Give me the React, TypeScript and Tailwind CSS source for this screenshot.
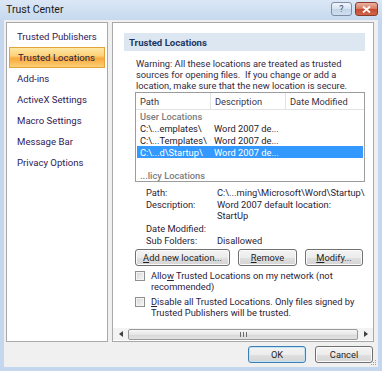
import React from 'react';

const sideItems = [
  'Trusted Publishers',
  'Trusted Locations',
  'Add-ins',
  'ActiveX Settings',
  'Macro Settings',
  'Message Bar',
  'Privacy Options',
];

const rows = [
  { path: 'C:\\...emplates\\', desc: 'Word 2007 de...' },
  { path: 'C:\\...Templates\\', desc: 'Word 2007 de...' },
  { path: 'C:\\...d\\Startup\\', desc: 'Word 2007 de...', selected: true },
];

const btn =
  'h-[17px] rounded-[3px] border border-[#707070] bg-[linear-gradient(to_bottom,#f4f4f4_0%,#ececec_50%,#e0e0e0_50%,#d4d4d4_100%)] shadow-[inset_0_0_0_1px_#fbfbfb] flex items-center justify-center text-[#1e1e1e]';

function Checkbox() {
  return (
    <div className="w-[10px] h-[10px] shrink-0 border border-[#8e8f8f] bg-[linear-gradient(135deg,#d6d6d6,#f6f6f6)] shadow-[inset_0_0_0_1px_#f4f4f4]" />
  );
}

export default function App() {
  return (
    <div className="w-[382px] h-[371px] bg-[#c4d7ee] flex flex-col overflow-hidden font-['Roboto',sans-serif] text-[9.3px] leading-[11px] text-[#2b2340]">
      {/* title bar */}
      <div className="h-[20px] shrink-0 flex items-start pl-[6px] pr-[4px] bg-[linear-gradient(to_bottom,#dbe7f5,#c6d9ef)]">
        <span className="mt-[3px] text-[10.5px] leading-[13px] text-[#1b1b1b]">Trust Center</span>
        <div className="ml-auto mt-[2px] flex gap-[3px]">
          <div className="w-[21px] h-[14px] rounded-[3px] border border-[#7d8da5] bg-[linear-gradient(to_bottom,#f0f5fb,#d5e2f1_50%,#c3d4e9_51%,#cfdff0)] flex items-center justify-center text-[9px] leading-[9px] text-[#3f4e66]">
            ?
          </div>
          <div className="w-[23px] h-[14px] rounded-[3px] border border-[#8a3a2a] bg-[linear-gradient(to_bottom,#eab3a4,#d8765f_50%,#c54a30_51%,#d0664a)] flex items-center justify-center">
            <svg width="9" height="7" viewBox="0 0 9 7">
              <path d="M1 0.5 L8 6.5 M8 0.5 L1 6.5" stroke="#fff" strokeWidth="1.8" />
            </svg>
          </div>
        </div>
      </div>

      {/* body */}
      <div className="flex-1 mx-[4px] mb-[4px] bg-[#f0f0f0] flex flex-col pl-[2px] pr-[4px] pt-[2px] relative">
        <div className="flex gap-[4px] h-[320px]">
          {/* left nav */}
          <div className="w-[102px] shrink-0 border border-[#a9a9a9] bg-white pt-[3px] px-[2px]">
            {sideItems.map((item) => {
              const active = item === 'Trusted Locations';
              return (
                <div
                  key={item}
                  className={
                    'h-[21px] flex items-center pl-[8px] text-[9.6px] ' +
                    (active
                      ? 'border border-[#e3a53b] bg-[linear-gradient(to_bottom,#fde8a6_0%,#fcd27a_40%,#f9a93c_55%,#fccf74_100%)] text-[#2a2040]'
                      : 'text-[#2f2158]')
                  }
                >
                  {item}
                </div>
              );
            })}
          </div>

          {/* right content */}
          <div className="flex-1 border border-[#a9a9a9] bg-white flex flex-col overflow-hidden">
            <div className="flex-1 pt-[10px] pl-[11px] pr-[8px] overflow-hidden">
              <div className="h-[18px] bg-[#dde7f1] pl-[5px] flex items-center font-bold text-[9.6px] text-[#1d3763]">
                Trusted Locations
              </div>

              <p className="mt-[7px] pl-[12px] whitespace-nowrap text-[#33293f]">
                Warning: All these locations are treated as trusted
                <br />
                sources for opening files.&nbsp; If you change or add a
                <br />
                location, make sure that the new location is secure.
              </p>

              {/* list box */}
              <div className="mt-[1px] ml-[11px] w-[230px] h-[90px] border border-[#9c9c9c] bg-white flex flex-col">
                <div className="h-[17px] flex border-b border-[#e3e3e3] text-[#3a3344]">
                  <div className="w-[75px] pl-[4px] flex items-center border-r border-[#e3e3e3]">Path</div>
                  <div className="w-[75px] pl-[4px] flex items-center border-r border-[#e3e3e3]">Description</div>
                  <div className="flex-1 pl-[4px] flex items-center">Date Modified</div>
                </div>
                <div className="h-[12px] pl-[4px] flex items-center text-[#7d7d7d] font-medium">User Locations</div>
                {rows.map((r) => (
                  <div
                    key={r.path}
                    className={
                      'h-[12px] mx-[1px] flex items-center ' +
                      (r.selected ? 'bg-[#3399ff] text-white' : 'text-[#1f1a2a]')
                    }
                  >
                    <div className="w-[74px] pl-[3px] whitespace-nowrap">{r.path}</div>
                    <div className="pl-[3px] whitespace-nowrap">{r.desc}</div>
                  </div>
                ))}
                <div className="h-[11px]" />
                <div className="h-[12px] pl-[4px] flex items-center text-[#7d7d7d] font-medium">...licy Locations</div>
              </div>

              {/* details */}
              <div className="mt-[4px] pl-[22px] text-[#2a2438]">
                <div className="flex h-[12px] items-center">
                  <div className="w-[71px] shrink-0">Path:</div>
                  <div className="whitespace-nowrap">C:\...ming\Microsoft\Word\Startup\</div>
                </div>
                <div className="flex pt-[1px]">
                  <div className="w-[71px] shrink-0">Description:</div>
                  <div>
                    Word 2007 default location:
                    <br />
                    StartUp
                  </div>
                </div>
                <div className="flex h-[12px] mt-[1px] items-center">
                  <div className="w-[71px] shrink-0">Date Modified:</div>
                </div>
                <div className="flex h-[12px] items-center">
                  <div className="w-[71px] shrink-0">Sub Folders:</div>
                  <div>Disallowed</div>
                </div>
              </div>

              {/* buttons */}
              <div className="mt-[3px] ml-[11px] flex gap-[8px]">
                <div className={btn + ' w-[95px]'}>
                  <span>
                    <u>A</u>dd new location...
                  </span>
                </div>
                <div className={btn + ' w-[59px]'}>
                  <span>
                    <u>R</u>emove
                  </span>
                </div>
                <div className={btn + ' w-[58px]'}>
                  <span>
                    <u>M</u>odify...
                  </span>
                </div>
              </div>

              {/* checkboxes */}
              <div className="mt-[4px] ml-[11px] flex gap-[6px] items-start">
                <div className="mt-[1px]">
                  <Checkbox />
                </div>
                <div className="whitespace-nowrap text-[#2b2340]">
                  Allo<u>w</u> Trusted Locations on my network (not
                  <br />
                  recommended)
                </div>
              </div>
              <div className="mt-[4px] ml-[11px] flex gap-[6px] items-start">
                <div className="mt-[1px]">
                  <Checkbox />
                </div>
                <div className="whitespace-nowrap text-[#2b2340]">
                  <u>D</u>isable all Trusted Locations. Only files signed by
                  <br />
                  Trusted Publishers will be trusted.
                </div>
              </div>
            </div>

            {/* horizontal scrollbar */}
            <div className="h-[12px] mb-[1px] shrink-0 flex items-center bg-[#f3f3f3]">
              <div className="w-[15px] flex items-center justify-center">
                <svg width="4" height="6" viewBox="0 0 4 6">
                  <path d="M4 0 L0 3 L4 6 Z" fill="#404040" />
                </svg>
              </div>
              <div className="flex-1 h-[11px] rounded-[2px] border border-[#9a9a9a] bg-[linear-gradient(to_bottom,#f6f6f6,#e6e6e6_50%,#d8d8d8_51%,#e2e2e2)] flex items-center justify-center">
                <svg width="7" height="5" viewBox="0 0 7 5">
                  <path d="M0.5 0 V5 M3.5 0 V5 M6.5 0 V5" stroke="#6c6c6c" strokeWidth="1" />
                </svg>
              </div>
              <div className="w-[15px] flex items-center justify-center">
                <svg width="4" height="6" viewBox="0 0 4 6">
                  <path d="M0 0 L4 3 L0 6 Z" fill="#404040" />
                </svg>
              </div>
            </div>
          </div>
        </div>

        {/* dialog buttons */}
        <div className="mt-[4px] flex justify-end gap-[9px] pr-[1px]">
          <div className="w-[58px] h-[17px] rounded-[3px] border border-[#3c7fb1] bg-[linear-gradient(to_bottom,#f4f4f4_0%,#ececec_50%,#e0e0e0_50%,#d4d4d4_100%)] shadow-[inset_0_0_0_1px_#bfe4f9] flex items-center justify-center text-[#1e1e1e]">
            OK
          </div>
          <div className={btn + ' w-[58px]'}>Cancel</div>
        </div>

        {/* resize grip */}
        <svg className="absolute right-[1px] bottom-[1px]" width="8" height="8" viewBox="0 0 8 8">
          <rect x="6" y="2" width="1" height="1" fill="#a0a0a0" />
          <rect x="4" y="4" width="1" height="1" fill="#a0a0a0" />
          <rect x="6" y="4" width="1" height="1" fill="#a0a0a0" />
          <rect x="2" y="6" width="1" height="1" fill="#a0a0a0" />
          <rect x="4" y="6" width="1" height="1" fill="#a0a0a0" />
          <rect x="6" y="6" width="1" height="1" fill="#a0a0a0" />
        </svg>
      </div>
    </div>
  );
}
